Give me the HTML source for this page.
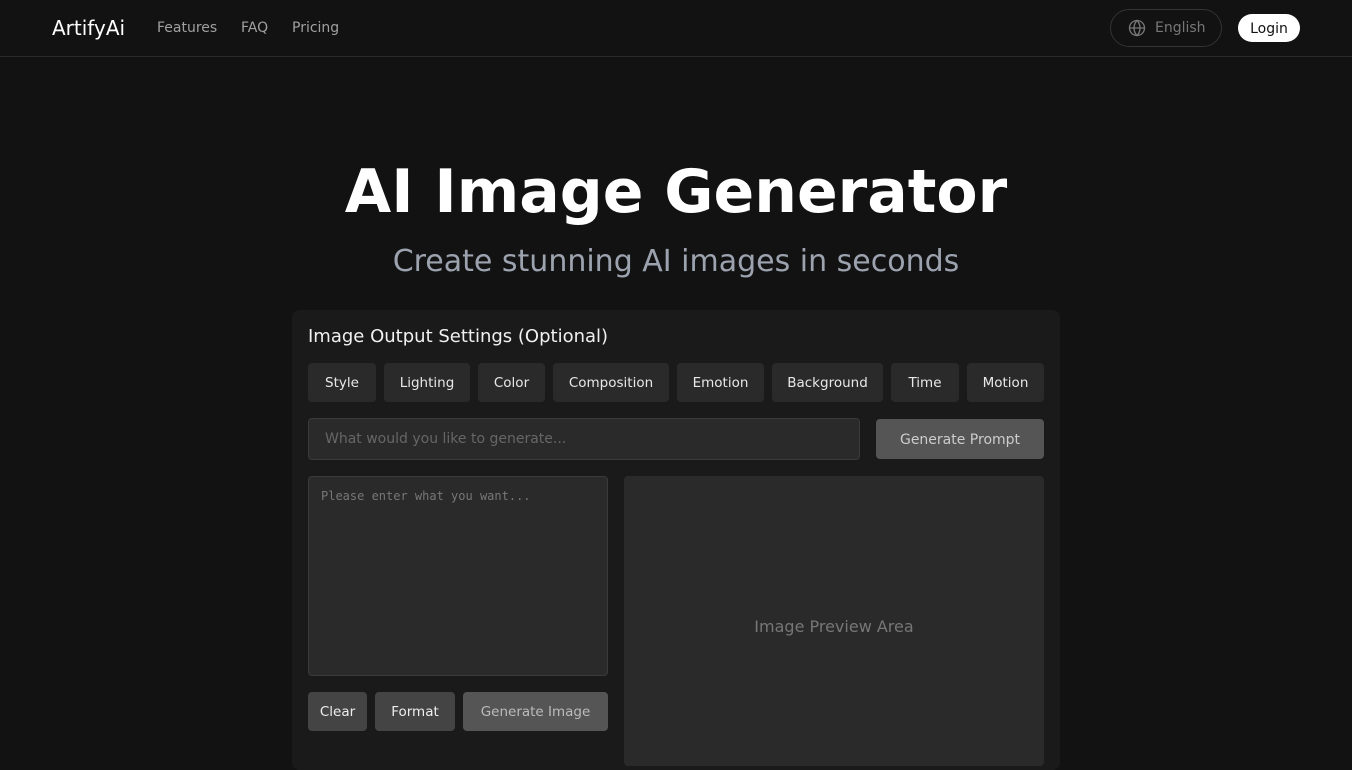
<!DOCTYPE html>
<html><head><meta charset="utf-8"><style>
*{box-sizing:border-box;margin:0;padding:0}
body{width:1352px;height:760px;overflow:hidden;background:#121212;font-family:"DejaVu Sans","Liberation Sans",sans-serif;color:#fff;position:relative}
.a{position:absolute}
.nav{top:0;left:0;width:1352px;height:57px;border-bottom:1px solid #2a2a2a}
.btn{position:absolute;background:#2a2a2a;border-radius:4px;font-size:13.5px;color:#e8e8e8;display:flex;align-items:center;justify-content:center;height:39px;top:363px}
</style></head><body>
<div class="a nav"></div>
<div class="a" style="left:52px;top:16px;font-size:20px;color:#fff">ArtifyAi</div>
<div class="a" style="left:157px;top:20px;font-size:14px;color:#a0a0a0">Features</div>
<div class="a" style="left:241px;top:20px;font-size:14px;color:#a0a0a0">FAQ</div>
<div class="a" style="left:292px;top:20px;font-size:14px;color:#a0a0a0">Pricing</div>
<div class="a" style="left:1110px;top:9px;width:112px;height:38px;border:1px solid #333;border-radius:19px"></div>
<svg class="a" style="left:1128px;top:19px" width="18" height="18" viewBox="0 0 24 24" fill="none" stroke="#777" stroke-width="1.8"><circle cx="12" cy="12" r="10"/><path d="M2 12h20M12 2c3 3 4 6.5 4 10s-1 7-4 10c-3-3-4-6.5-4-10s1-7 4-10z"/></svg>
<div class="a" style="left:1155px;top:20px;font-size:14px;color:#777">English</div>
<div class="a" style="left:1238px;top:14px;width:62px;height:28px;background:#fff;border-radius:14px;color:#111;font-size:14px;display:flex;align-items:center;justify-content:center;padding-top:1px">Login</div>
<div class="a" style="left:0;width:1352px;top:157px;text-align:center;font-size:60px;font-weight:bold">AI Image Generator</div>
<div class="a" style="left:0;width:1352px;top:244px;text-align:center;font-size:30px;color:#9ca3af">Create stunning AI images in seconds</div>
<div class="a" style="left:292px;top:310px;width:768px;height:460px;background:#1a1a1a;border-radius:8px"></div>
<div class="a" style="left:308px;top:326px;font-size:18px;color:#f0f0f0">Image Output Settings (Optional)</div>
<div class="btn" style="left:308px;width:68px">Style</div>
<div class="btn" style="left:384px;width:86px">Lighting</div>
<div class="btn" style="left:478px;width:67px">Color</div>
<div class="btn" style="left:553px;width:116px">Composition</div>
<div class="btn" style="left:677px;width:87px">Emotion</div>
<div class="btn" style="left:772px;width:111px">Background</div>
<div class="btn" style="left:891px;width:68px">Time</div>
<div class="btn" style="left:967px;width:77px">Motion</div>
<div class="a" style="left:308px;top:418px;width:552px;height:42px;background:#2a2a2a;border:1px solid #3a3a3a;border-radius:4px;padding-left:16px;line-height:40px;font-size:14px;color:#666">What would you like to generate...</div>
<div class="a" style="left:876px;top:419px;width:168px;height:40px;background:#555;border-radius:4px;font-size:14px;color:#ccc;display:flex;align-items:center;justify-content:center;padding-top:1px">Generate Prompt</div>
<div class="a" style="left:308px;top:476px;width:300px;height:200px;background:#2a2a2a;border:1px solid #3a3a3a;border-radius:4px;padding:12px;font-family:'DejaVu Sans Mono',monospace;font-size:12px;color:#777">Please enter what you want...</div>
<div class="a" style="left:624px;top:476px;width:420px;height:290px;background:#2a2a2a;border-radius:4px"></div>
<div class="a" style="left:624px;top:617px;width:420px;text-align:center;font-size:16px;color:#777">Image Preview Area</div>
<div class="btn" style="left:308px;top:692px;width:59px;background:#444;color:#eee">Clear</div>
<div class="btn" style="left:375px;top:692px;width:80px;background:#444;color:#eee">Format</div>
<div class="btn" style="left:463px;top:692px;width:145px;background:#555;color:#bbb">Generate Image</div>
</body></html>
